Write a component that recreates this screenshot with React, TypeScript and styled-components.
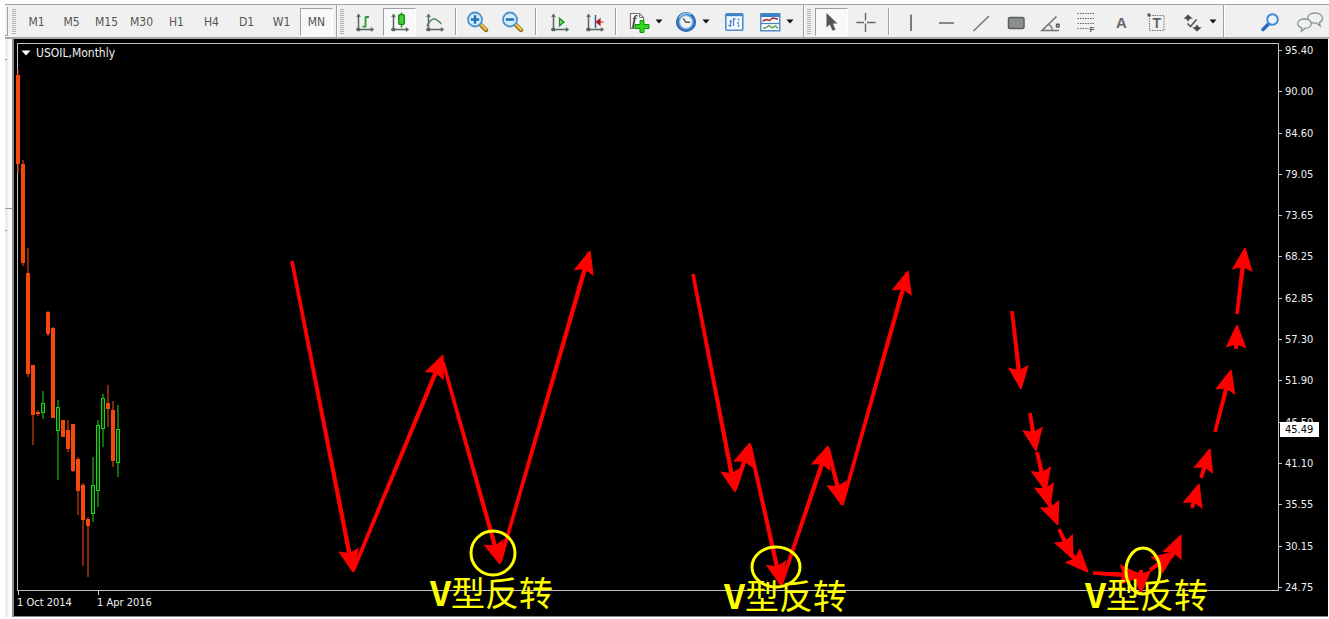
import React from "react";
import styled, { createGlobalStyle, css } from "styled-components";

const GlobalStyle = createGlobalStyle`
  * { box-sizing: border-box; }
  body {
    margin: 0;
    background: #fff;
    font-family: "DejaVu Sans Condensed", "DejaVu Sans", "Noto Sans CJK SC", sans-serif;
    font-size: 11px;
  }
`;

/* ---------- layout ---------- */

const Page = styled.div`
  padding: 4px 0 2px 5px;
`;

const Toolbar = styled.header`
  display: flex;
  height: 35px;
  border-top: 1px solid #a3a3a3;
  border-bottom: 2px solid #a8a8a8;
  background: #f0f0f0;
`;

const Stub = styled.div`
  width: 3px;
  margin: 2px 2px 1px 0;
  border-right: 1px solid #a0a0a0;
  border-bottom: 1px solid #a0a0a0;
`;

const Band = styled.div<{ $end?: number }>`
  display: flex;
  align-items: center;
  gap: 2px;
  padding: 1px ${(p) => p.$end ?? 3}px 0 2px;
  border-right: 1px solid #a0a0a0;
  box-shadow: 1px 0 0 #fff;
  margin-right: 1px;
`;

const Grip = styled.span`
  width: 4px;
  height: 25px;
  margin-right: 2px;
  background: repeating-linear-gradient(#b0b0b0 0 1px, #f4f4f4 1px 2px);
`;

const pressed = css`
  border-color: #a0a0a0 #fff #fff #a0a0a0;
  background: #f8f8f8;
`;

const ToolButton = styled.button<{ $on?: boolean }>`
  display: flex;
  align-items: center;
  justify-content: center;
  width: 33px;
  height: 28px;
  padding: 0;
  border: 1px solid transparent;
  background: none;
  color: #555;
  font: inherit;
  font-size: 12px;
  ${(p) => p.$on && pressed}
`;

const MenuButton = styled(ToolButton)`
  width: 47px;
  justify-content: flex-start;
  gap: 4px;
  padding-left: 6px;
`;

const Divider = styled.span<{ $space: number }>`
  width: 2px;
  height: 27px;
  margin: 0 ${(p) => p.$space}px;
  border-left: 1px solid #a0a0a0;
  border-right: 1px solid #fff;
`;

const ToolSet = styled.div`
  display: flex;
  gap: 2px;
`;

const IconRow = styled.div`
  display: flex;
  align-items: center;
`;

const RightTools = styled.div`
  display: flex;
  align-items: center;
  gap: 6px;
  margin-left: auto;
  padding-right: 3px;
`;

const Workspace = styled.main`
  display: flex;
`;

const SideStrip = styled.aside`
  display: flex;
  flex-direction: column;
  width: 9px;
  background: linear-gradient(90deg, #ececec 0 3px, #fafafa 3px);
  border-right: 2px solid #8c8c8c;
`;

const StripPart = styled.div<{ $grow: number; $short?: boolean }>`
  flex: ${(p) => p.$grow} 0 0;
  width: ${(p) => (p.$short ? "2px" : "auto")};
  border-bottom: 1px solid #999;
  &:last-child { border-bottom: 0; }
`;

const Chart = styled.section`
  flex: 1;
  display: grid;
  grid-template-columns: minmax(0, 1fr) 49px;
  grid-template-rows: auto 25px;
  margin-right: 1px;
  padding: 4px 0 0 3px;
  background: #000;
  color: #f0f0f0;
  border-bottom: 1px solid #888;
`;

const Plot = styled.div`
  position: relative;
  z-index: 1;
  border: 1px solid #c4c4c4;
`;

const PlotTitle = styled.h1`
  position: absolute;
  top: 2px;
  left: 3px;
  display: flex;
  align-items: center;
  gap: 5px;
  margin: 0;
  font-size: 12px;
  font-weight: 400;
  line-height: 14px;
`;

const Drawing = styled.svg`
  display: block;
  width: 100%;
  height: auto;
  overflow: visible;
`;

const PriceAxis = styled.div`
  grid-column: 2;
  grid-row: 1 / 3;
  padding-bottom: 21px;
`;

const PriceScale = styled.ol`
  position: relative;
  display: flex;
  flex-direction: column;
  justify-content: space-between;
  height: 100%;
  margin: 0;
  padding: 0;
  list-style: none;
`;

const Price = styled.li`
  display: flex;
  align-items: center;
  gap: 3px;
  line-height: 15px;
  &::before {
    content: "";
    width: 3px;
    height: 1px;
    background: #c4c4c4;
  }
`;

const LastPrice = styled.output`
  position: absolute;
  left: 1px;
  width: 39px;
  padding-left: 5px;
  background: #fff;
  color: #000;
  line-height: 15px;
`;

const TimeAxis = styled.div`
  display: flex;
`;

const TimeMark = styled.span`
  width: 80px;
  line-height: 15px;
  &::before {
    content: "";
    display: block;
    width: 1px;
    height: 4px;
    margin-left: 1px;
    background: #c4c4c4;
  }
`;

/* ---------- icons ---------- */

const Icon = ({ children }: { children: React.ReactNode }) => (
  <svg width="23" height="23" viewBox="0 0 23 23" fill="none" aria-hidden="true">
    {children}
  </svg>
);

const Caret = () => (
  <svg width="8" height="5" viewBox="0 0 8 5" aria-hidden="true">
    <path d="M0.500 0.500h7L4 4.500z" fill="#111" />
  </svg>
);

const Axes = () => (
  <g stroke="#5d6660" strokeWidth="1.500" fill="#5d6660">
    <path d="M5.500 5v16M3 19.500h17" />
    <path d="M5.500 3.800l2 3h-4zM21 19.500l-3-2v4z" strokeWidth=".4" />
    <path d="M3.800 17.800h3.400v3.400h-3.400z" strokeWidth="0" />
  </g>
);

const BarsIcon = () => (
  <Icon><Axes /><path d="M12.500 6.500v11M12.500 7h3.500M9.500 16.700h3" stroke="#2c9a33" strokeWidth="1.800" /></Icon>
);
const CandleIcon = () => (
  <Icon>
    <Axes />
    <path d="M13.500 2.500v15" stroke="#178a1b" strokeWidth="1.500" />
    <rect x="10.700" y="4.700" width="5.600" height="9.600" rx="1" fill="#3fd62f" stroke="#168a18" strokeWidth="1.300" />
  </Icon>
);
const LineIcon = () => (
  <Icon><Axes /><path d="M4 16c2-4 4-7 7-7.300 3 0 4.500 3.300 7.500 5" stroke="#4f8357" strokeWidth="1.600" /></Icon>
);
const ZoomIcon = ({ plus }: { plus?: boolean }) => (
  <Icon>
    <path d="M13.500 13.500l6.500 6.500" stroke="#8d6a1c" strokeWidth="4.400" strokeLinecap="round" />
    <path d="M14.500 14l5.500 5.500" stroke="#efc64a" strokeWidth="2.400" strokeLinecap="round" />
    <circle cx="9" cy="9.500" r="7" fill="#d3edfb" stroke="#4f93cf" strokeWidth="1.800" />
    <path d={plus ? "M4.800 9.500h8.400M9 5.300v8.400" : "M4.800 9.500h8.400"} stroke="#2571b8" strokeWidth="2.500" />
  </Icon>
);
const ScrollIcon = () => (
  <Icon><Axes /><path d="M11.500 8.200l4.500 3.800-4.500 3.800z" fill="#77dd66" stroke="#218d28" strokeWidth="1.300" /></Icon>
);
const ShiftIcon = () => (
  <Icon>
    <Axes />
    <path d="M12.500 5v13" stroke="#355c9d" strokeWidth="1.500" />
    <path d="M13.500 12l3.500-3v6zM16.500 12h4" fill="#b5161c" stroke="#b5161c" strokeWidth="1.200" />
  </Icon>
);
const IndicatorIcon = () => (
  <Icon>
    <path d="M2.500 3.500h9l4 4v11h-13z" fill="#fff" stroke="#777" strokeWidth="1.200" />
    <path d="M11.500 3.500v4h4" stroke="#777" />
    <text x="4" y="15" fontFamily="Liberation Serif, serif" fontSize="14" fontWeight="700" fontStyle="italic" fill="#444">f</text>
    <path d="M12 10.500h4v4h5v4h-5v4h-4v-4h-5v-4h5z" fill="#35d820" stroke="#12930e" />
  </Icon>
);
const ClockIcon = () => (
  <Icon>
    <circle cx="11" cy="12" r="9.300" fill="#3f86d2" stroke="#2a62a8" strokeWidth="1.500" />
    <path d="M4 8a8.500 8.500 0 0 1 12-3.500" stroke="#8fc4f2" strokeWidth="1.600" />
    <circle cx="11" cy="12" r="6.200" fill="#f1f3f1" stroke="#c2d5e6" />
    <path d="M8.300 8.500L11 12.300h4" stroke="#555" strokeWidth="1.400" />
  </Icon>
);
const TemplateIcon = () => (
  <Icon>
    <rect x="3.800" y="3.800" width="17" height="16.500" rx="1" fill="#f3f9fe" stroke="#4a8fcb" strokeWidth="1.600" />
    <path d="M4 5h17" stroke="#3f83c4" strokeWidth="2.400" />
    <path d="M8.500 10v7M6.500 15.500h2M8.500 11.500h1.500M11.500 8v8M11.500 9h2M16.500 8.500v2M15 13h2M16.500 14.500v2.500" stroke="#4784c0" strokeWidth="1.300" />
  </Icon>
);
const WindowsIcon = () => (
  <Icon>
    <rect x="1.800" y="3.800" width="19" height="17" fill="#fbfdfb" stroke="#4a87bf" strokeWidth="1.400" />
    <path d="M2 5.200h18.500" stroke="#3d82c6" strokeWidth="3.600" />
    <path d="M2 13.500h18.500" stroke="#4a87bf" strokeWidth="1.300" />
    <path d="M3.500 11l4-1.500 3 1 3-2.500 5.500 1" stroke="#9a2630" strokeWidth="1.500" />
    <path d="M4 18.500l3-1 3-2 3 2.300 3.500-2 2.500 2.700" stroke="#5c9b50" strokeWidth="1.400" />
  </Icon>
);
const PointerIcon = () => (
  <Icon><path d="M6.500 3v14.500l3.300-3 2.700 6.200 3-1.300-2.600-6h4.600z" fill="#555" /></Icon>
);
const CrossIcon = () => (
  <Icon><path d="M10.500 3v7.500M10.500 13.500v8.500M1.500 12.500h7.500M12 12.500h8.500" stroke="#666" strokeWidth="1.400" /></Icon>
);
const VLineIcon = () => <Icon><path d="M11 4.500v16.500" stroke="#555" strokeWidth="1.500" /></Icon>;
const HLineIcon = () => <Icon><path d="M4 13h15" stroke="#666" strokeWidth="1.500" /></Icon>;
const TrendIcon = () => <Icon><path d="M3.500 21L19 6" stroke="#6d7a70" strokeWidth="1.500" /></Icon>;
const RectIcon = () => (
  <Icon><rect x="3.500" y="7.500" width="15.500" height="11" rx="1.500" fill="#8b908c" stroke="#5c5f5c" strokeWidth="1.500" /></Icon>
);
const AngleIcon = () => (
  <Icon>
    <path d="M16.500 6.500L2 20.500h17" stroke="#6d736f" strokeWidth="1.500" />
    <path d="M8 14.500c2.500.5 4 3 4.300 6" stroke="#777" strokeWidth="1.300" />
    <rect x="16.500" y="14.300" width="2.600" height="2.600" stroke="#555" strokeWidth="1.400" />
  </Icon>
);
const FiboIcon = () => (
  <Icon>
    <path d="M2.500 3.500h17M2.500 8.500h17M2.500 13.500h17M2.500 18.500h11" stroke="#666" strokeWidth="1.200" strokeDasharray="1.500 1" />
    <text x="14.500" y="22" fontFamily="Liberation Sans, sans-serif" fontSize="8" fontWeight="700" fill="#555">F</text>
  </Icon>
);
const LetterIcon = () => (
  <Icon><text x="11.500" y="18" textAnchor="middle" fontFamily="Liberation Sans, sans-serif" fontSize="15" fontWeight="700" fill="#666">A</text></Icon>
);
const LabelIcon = () => (
  <Icon>
    <rect x="4.500" y="5.500" width="14.500" height="15" stroke="#777" strokeDasharray="1.500 1" />
    <rect x="2.500" y="3.500" width="3" height="3" fill="#555" />
    <text x="11.800" y="18" textAnchor="middle" fontFamily="Liberation Sans, sans-serif" fontSize="14" fontWeight="700" fill="#666">T</text>
  </Icon>
);
const ArrowsIcon = () => (
  <Icon>
    <path d="M6 4.500l4.800 4.300H8L6 11.500 4 8.800H1.500zM15 21.500l-4.800-4.300h2.800l2-2.700 2 2.700h2.800z" fill="#4d4d4d" />
    <path d="M5.500 13.500l3 3 6-7" stroke="#555" strokeWidth="1.600" />
  </Icon>
);
const SearchIcon = () => (
  <Icon>
    <path d="M9.500 14L4 19.500" stroke="#2b6dbb" strokeWidth="3.600" strokeLinecap="round" />
    <circle cx="13.500" cy="9.500" r="5.300" fill="#eaf4fd" stroke="#4388d2" strokeWidth="1.900" />
  </Icon>
);
const ChatIcon = () => (
  <svg width="28" height="23" viewBox="0 0 28 23" fill="#eff3f0" stroke="#8b928d" strokeWidth="1.300" aria-hidden="true">
    <path d="M19 3c4.500 0 7.500 2.200 7.500 5.200 0 2-1.200 3.500-3 4.300l.6 3.500-3.700-2.900c-4.700.3-8.700-1.700-8.700-4.900C11.700 5.200 14.500 3 19 3z" />
    <path d="M8.500 9c4 0 6.800 2 6.800 4.700s-2.800 4.700-6.500 4.700l-3.500 2.900.4-3.500c-2.300-.8-4-2.200-4-4.100C1.700 11 4.500 9 8.500 9z" />
  </svg>
);

/* ---------- chart data ---------- */

// [high, body top, body bottom, low, rising]
type Candle = [number, number, number, number, boolean?];
const candles: Candle[] = [
  [70, 75, 164, 173], [160, 164, 263, 266], [248, 273, 374, 377], [365, 365, 415, 445],
  [410, 412, 414, 416], [391, 403, 413, 419, true], [311, 312, 334, 336], [327, 328, 418, 418],
  [400, 407, 431, 480, true], [420, 420, 437, 437], [420, 430, 449, 452], [424, 424, 471, 472],
  [457, 459, 491, 515], [483, 485, 520, 566], [517, 519, 526, 577], [457, 485, 514, 522, true],
  [420, 425, 491, 507, true], [394, 398, 429, 447, true], [385, 403, 409, 427],
  [401, 410, 461, 467], [405, 429, 463, 477, true],
];

// [x1, y1, x2, y2], the head sits at the second point
type Line = [number, number, number, number];
const arrows: Line[] = [
  [292, 261, 353, 572], [353, 571, 443, 355], [443, 362, 500, 564], [500, 562, 590, 251],
  [693, 274, 735, 492], [735, 490, 750, 443], [750, 446, 781, 585], [781, 585, 828, 446],
  [828, 448, 842, 505], [842, 505, 908, 271],
  [1012, 311, 1021, 389], [1030, 413, 1036, 451], [1037, 452, 1046, 491], [1044, 485, 1050, 507],
  [1048, 500, 1058, 525], [1059, 529, 1073, 559], [1072, 555, 1088, 572], [1093, 573, 1142, 576],
  [1141, 570, 1141, 593], [1150, 570, 1175, 552], [1171, 558, 1181, 535], [1192, 508, 1199, 484],
  [1201, 478, 1210, 449], [1215, 432, 1231, 370], [1236, 349, 1237, 325], [1237, 314, 1245, 248],
];

const arrowPath = ([x1, y1, x2, y2]: Line) => {
  const len = Math.hypot(x2 - x1, y2 - y1);
  const ux = (x2 - x1) / len;
  const uy = (y2 - y1) / len;
  const at = (back: number, side: number) =>
    `${(x2 - ux * back - uy * side).toFixed(1)} ${(y2 - uy * back + ux * side).toFixed(1)}`;
  const neck = Math.min(20, len);
  return `M${at(0, 0.7)}L${at(23, 10.5)}L${at(neck, 2.2)}L${at(len, 1.8)}L${at(len, -1.8)}L${at(neck, -2.2)}L${at(23, -10.5)}L${at(0, -0.7)}Z`;
};

const rings = [
  { cx: 493, cy: 553, rx: 22, ry: 22 },
  { cx: 776, cy: 567, rx: 24, ry: 20 },
  { cx: 1143, cy: 571, rx: 17, ry: 23 },
];

const notes = [{ x: 430, y: 606 }, { x: 724, y: 609 }, { x: 1085, y: 608 }];

const prices = ["95.40", "90.00", "84.60", "79.05", "73.65", "68.25", "62.85", "57.30", "51.90", "46.50", "41.10", "35.55", "30.15", "24.75"];
const last = "45.49";
const lastShare = (95.4 - Number(last)) / (95.4 - 24.75);

const periods = ["M1", "M5", "M15", "M30", "H1", "H4", "D1", "W1", "MN"];

const drawTools: [string, React.ReactNode][] = [
  ["Vertical line", <VLineIcon />], ["Horizontal line", <HLineIcon />], ["Trend line", <TrendIcon />],
  ["Rectangle", <RectIcon />], ["Angle", <AngleIcon />], ["Fibonacci", <FiboIcon />],
  ["Text", <LetterIcon />], ["Text label", <LabelIcon />],
];

const CandleShape = ({ x, data: [high, top, bottom, low, up] }: { x: number; data: Candle }) => (
  <g>
    <path d={`M${x} ${high}V${low}`} stroke={up ? "#14a814" : "#c43c0c"} strokeWidth="1.300" />
    {up ? (
      <rect x={x - 1.5} y={top + 0.5} width="3" height={bottom - top - 1} fill="#063806" stroke="#1fd01f" />
    ) : (
      <rect x={x - 2} y={top} width="4" height={bottom - top} fill="#f4480c" />
    )}
  </g>
);

export default function App() {
  return (
    <Page>
      <GlobalStyle />
      <Toolbar>
        <Stub />
        <Band>
          <Grip />
          {periods.map((p) => (
            <ToolButton key={p} $on={p === "MN"}>{p}</ToolButton>
          ))}
        </Band>
        <Band $end={4}>
          <Grip />
          <IconRow>
            <ToolSet>
              <ToolButton aria-label="Bar chart"><BarsIcon /></ToolButton>
              <ToolButton aria-label="Candlesticks" $on><CandleIcon /></ToolButton>
              <ToolButton aria-label="Line chart"><LineIcon /></ToolButton>
            </ToolSet>
            <Divider $space={4} />
            <ToolSet>
              <ToolButton aria-label="Zoom in"><ZoomIcon plus /></ToolButton>
              <ToolButton aria-label="Zoom out"><ZoomIcon /></ToolButton>
            </ToolSet>
            <Divider $space={6} />
            <ToolSet>
              <ToolButton aria-label="Auto scroll"><ScrollIcon /></ToolButton>
              <ToolButton aria-label="Chart shift"><ShiftIcon /></ToolButton>
            </ToolSet>
            <Divider $space={4} />
            <MenuButton aria-label="Indicators"><IndicatorIcon /><Caret /></MenuButton>
            <MenuButton aria-label="Periods"><ClockIcon /><Caret /></MenuButton>
          </IconRow>
          <ToolButton aria-label="Template"><TemplateIcon /></ToolButton>
          <MenuButton aria-label="Windows"><WindowsIcon /><Caret /></MenuButton>
        </Band>
        <Band $end={1}>
          <Grip />
          <IconRow>
            <ToolSet>
              <ToolButton aria-label="Cursor" $on><PointerIcon /></ToolButton>
              <ToolButton aria-label="Crosshair"><CrossIcon /></ToolButton>
            </ToolSet>
            <Divider $space={5} />
            <ToolSet>
              {drawTools.map(([name, icon]) => (
                <ToolButton key={name} aria-label={name}>{icon}</ToolButton>
              ))}
              <MenuButton aria-label="Arrows"><ArrowsIcon /><Caret /></MenuButton>
            </ToolSet>
          </IconRow>
        </Band>
        <RightTools>
          <ToolButton aria-label="Search"><SearchIcon /></ToolButton>
          <ToolButton aria-label="Chat"><ChatIcon /></ToolButton>
        </RightTools>
      </Toolbar>

      <Workspace>
        <SideStrip>
          <StripPart $grow={20} $short />
          <StripPart $grow={149} />
          <StripPart $grow={21} $short />
          <StripPart $grow={388} />
        </SideStrip>
        <Chart>
          <Plot>
            <Drawing viewBox="18 44 1260 546" role="img" aria-label="USOIL monthly candles with reversal patterns">
              {candles.map((c, i) => (
                <CandleShape key={i} x={18 + i * 5} data={c} />
              ))}
              {arrows.map((a, i) => (
                <path key={i} d={arrowPath(a)} fill="#f00" />
              ))}
              {rings.map((r) => (
                <ellipse key={r.cx} {...r} fill="none" stroke="#ff0" strokeWidth="3" />
              ))}
              <g fill="#ff0" fontSize="34" fontFamily='"Noto Sans CJK SC", sans-serif'>
                {notes.map((n) => (
                  <text key={n.x} x={n.x} y={n.y}>
                    <tspan fontWeight="700">V</tspan>型反转
                  </text>
                ))}
              </g>
            </Drawing>
            <PlotTitle>
              <svg width="10" height="6" viewBox="0 0 10 6" aria-hidden="true">
                <path d="M0.500 0.500h9L5 5.500z" fill="#fff" />
              </svg>
              USOIL,Monthly
            </PlotTitle>
          </Plot>
          <PriceAxis>
            <PriceScale>
              {prices.map((p) => (
                <Price key={p}>{p}</Price>
              ))}
              <LastPrice style={{ top: `calc((100% - 15px) * ${lastShare})` }}>{last}</LastPrice>
            </PriceScale>
          </PriceAxis>
          <TimeAxis>
            <TimeMark>1 Oct 2014</TimeMark>
            <TimeMark>1 Apr 2016</TimeMark>
          </TimeAxis>
        </Chart>
      </Workspace>
    </Page>
  );
}
